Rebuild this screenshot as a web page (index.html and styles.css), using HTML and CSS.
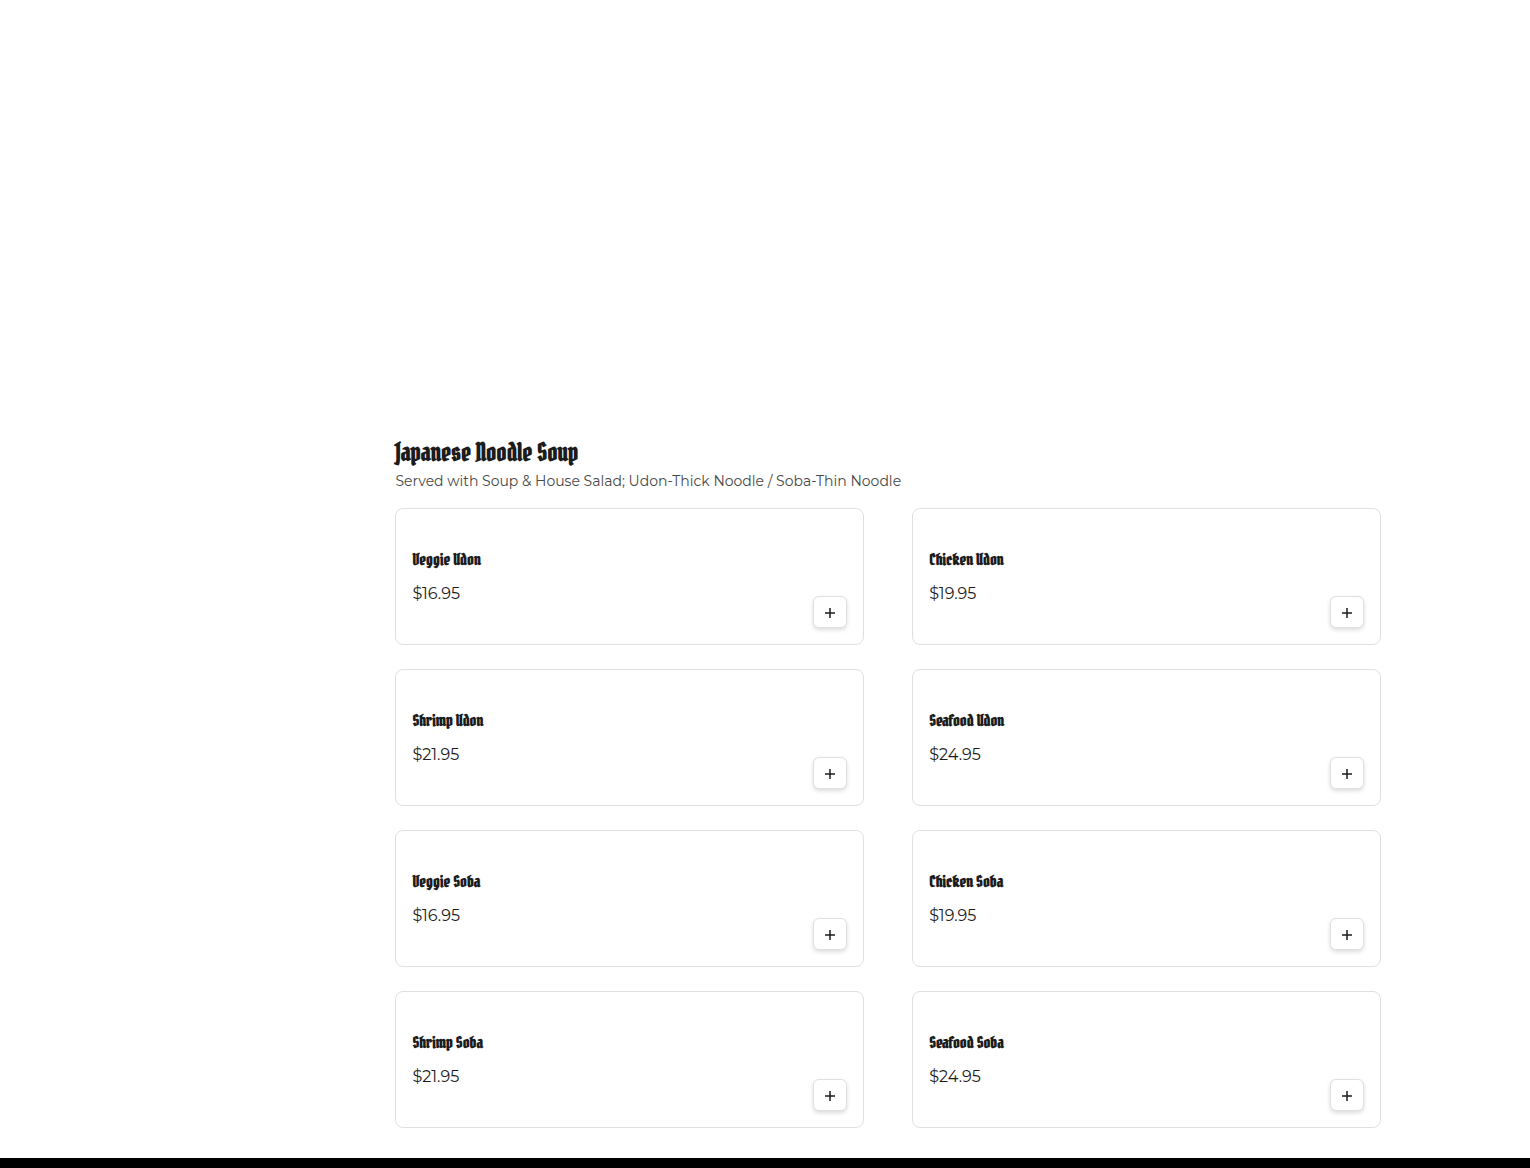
FILE: index.html
```
<!DOCTYPE html>
<html lang="en">
<head>
<meta charset="utf-8">
<meta name="viewport" content="width=device-width, initial-scale=1">
<title>Japanese Noodle Soup</title>
<link rel="stylesheet" href="styles.css">
</head>
<body>
<main class="page">
  <section class="menu">
    <h2 class="menu-title">Japanese Noodle Soup</h2>
    <p class="menu-note">Served with Soup &amp; House Salad; Udon-Thick Noodle / Soba-Thin Noodle</p>
    <div class="items">
      <article class="card"><div><h3 class="name">Veggie Udon</h3><p class="price">$16.95</p></div><button class="add" type="button" aria-label="Add Veggie Udon"><svg class="plus" viewBox="0 0 10 10" aria-hidden="true"><path d="M5 0v10M0 5h10"/></svg></button></article>
      <article class="card"><div><h3 class="name">Chicken Udon</h3><p class="price">$19.95</p></div><button class="add" type="button" aria-label="Add Chicken Udon"><svg class="plus" viewBox="0 0 10 10" aria-hidden="true"><path d="M5 0v10M0 5h10"/></svg></button></article>
      <article class="card"><div><h3 class="name">Shrimp Udon</h3><p class="price">$21.95</p></div><button class="add" type="button" aria-label="Add Shrimp Udon"><svg class="plus" viewBox="0 0 10 10" aria-hidden="true"><path d="M5 0v10M0 5h10"/></svg></button></article>
      <article class="card"><div><h3 class="name">Seafood Udon</h3><p class="price">$24.95</p></div><button class="add" type="button" aria-label="Add Seafood Udon"><svg class="plus" viewBox="0 0 10 10" aria-hidden="true"><path d="M5 0v10M0 5h10"/></svg></button></article>
      <article class="card"><div><h3 class="name">Veggie Soba</h3><p class="price">$16.95</p></div><button class="add" type="button" aria-label="Add Veggie Soba"><svg class="plus" viewBox="0 0 10 10" aria-hidden="true"><path d="M5 0v10M0 5h10"/></svg></button></article>
      <article class="card"><div><h3 class="name">Chicken Soba</h3><p class="price">$19.95</p></div><button class="add" type="button" aria-label="Add Chicken Soba"><svg class="plus" viewBox="0 0 10 10" aria-hidden="true"><path d="M5 0v10M0 5h10"/></svg></button></article>
      <article class="card"><div><h3 class="name">Shrimp Soba</h3><p class="price">$21.95</p></div><button class="add" type="button" aria-label="Add Shrimp Soba"><svg class="plus" viewBox="0 0 10 10" aria-hidden="true"><path d="M5 0v10M0 5h10"/></svg></button></article>
      <article class="card"><div><h3 class="name">Seafood Soba</h3><p class="price">$24.95</p></div><button class="add" type="button" aria-label="Add Seafood Soba"><svg class="plus" viewBox="0 0 10 10" aria-hidden="true"><path d="M5 0v10M0 5h10"/></svg></button></article>
    </div>
  </section>
</main>
<footer class="footer"></footer>
</body>
</html>
```
FILE: styles.css
```
* {
  box-sizing: border-box;
  margin: 0;
}

body {
  background: #fff;
  color: #1c1c1c;
  font-family: Montserrat, "Open Sans", sans-serif;
  font-weight: 400;
}

.page {
  display: grid;
  grid-template-columns: 1fr 4fr;
  max-width: 1232px;
  margin: 0 auto;
  padding: 437px 0 30px;
}

.menu {
  grid-column: 2;
}

.menu-title,
.name {
  font-family: "Pirata One", "Liberation Sans Narrow", "Liberation Serif", serif;
  font-weight: 700;
}

.menu-title {
  font-size: 24px;
  line-height: 32px;
}

.menu-note {
  color: #484848;
  font-size: 14px;
  line-height: 24px;
  margin-bottom: 15px;
}

.items {
  display: grid;
  grid-template-columns: 1fr 1fr;
  gap: 24px 48px;
}

.card {
  display: flex;
  justify-content: space-between;
  align-items: center;
  min-height: 137px;
  padding: 16px;
  border: 1px solid #e0e0e0;
  border-radius: 8px;
}

.name {
  font-size: 16px;
  line-height: 25px;
  margin-bottom: 10px;
}

.price {
  font-size: 16px;
  line-height: 24px;
}

.add {
  display: flex;
  align-items: center;
  justify-content: center;
  align-self: flex-end;
  width: 34px;
  height: 32px;
  padding: 1px 0 0;
  background: #fff;
  border: 1px solid #e0e0e0;
  border-radius: 6px;
  box-shadow: 0 2px 4px rgba(0, 0, 0, 0.14);
}

.plus {
  width: 10px;
  height: 10px;
  fill: none;
  stroke: #1c1c1c;
  stroke-width: 1.5;
}

.footer {
  min-height: 10px;
  background: #000;
}
```
